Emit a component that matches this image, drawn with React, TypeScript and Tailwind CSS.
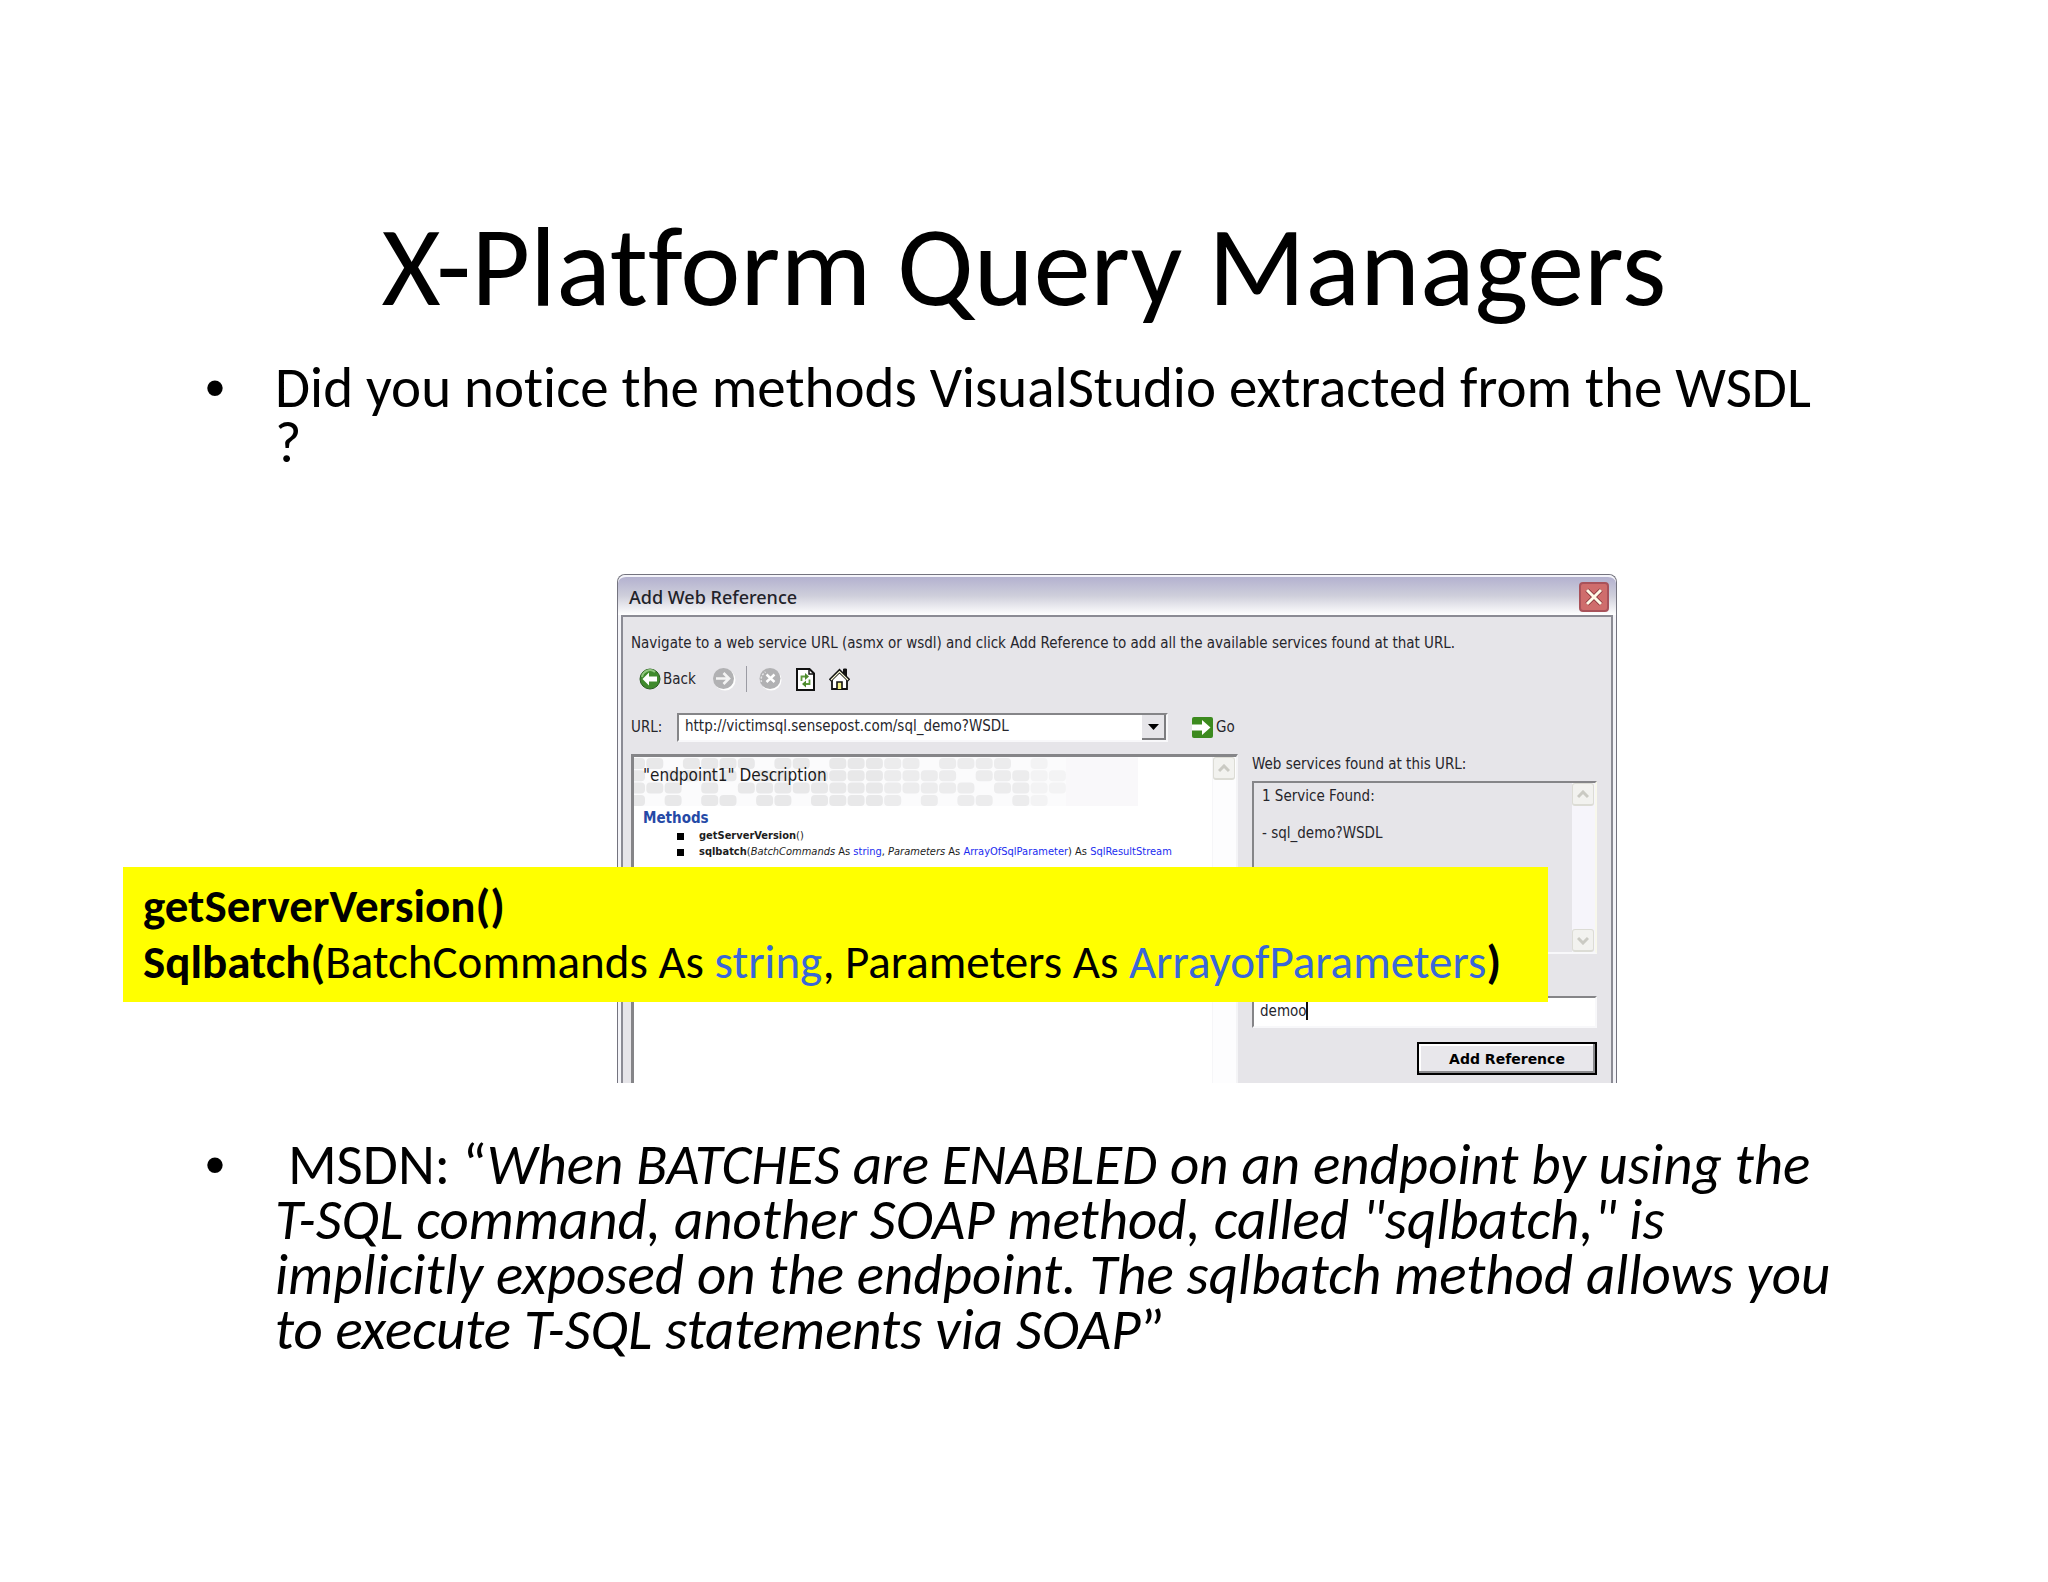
import React, { useState } from 'react';

const PATTERN = [
  '1101111011011111011110100000',
  '1011110110111111110111110000',
  '1110101111111111111011110000',
  '1010110110111110101101100000',
];

const uiFont = "font-['Tahoma','DejaVu_Sans_Condensed',sans-serif]";

function HeaderPattern() {
  return (
    <svg className="absolute left-0 top-0" width="504" height="49" viewBox="0 0 504 49" aria-hidden="true">
      <rect width="504" height="49" fill="#fbfbfc" />
      {PATTERN.map((row, y) =>
        row.split('').map((on, x) =>
          on === '1' ? (
            <rect
              key={`${x}-${y}`}
              x={x * 18.3 - 6}
              y={y * 12.3 + 1}
              width={17}
              height={11}
              rx={4}
              fill={x > 21 ? '#f3f3f4' : x > 13 ? '#ececed' : '#e8e8e9'}
            />
          ) : null
        )
      )}
      <rect x="432" y="1" width="72" height="48" fill="#f8f7f9" opacity="0.6" />
    </svg>
  );
}

function BackIcon() {
  return (
    <svg width="22" height="22" viewBox="0 0 22 22">
      <circle cx="11" cy="11" r="10" fill="#3f8a2c" stroke="#2b5c22" />
      <path d="M3 9a8 8 0 0 1 13-5" stroke="#8fc77e" strokeWidth="2" fill="none" />
      <path d="M3.5 11 10 4.5v4h8v5h-8v4z" fill="#fff" />
    </svg>
  );
}

function ForwardIcon() {
  return (
    <svg width="24" height="24" viewBox="0 0 24 24">
      <circle cx="13" cy="13" r="10.5" fill="#fff" />
      <circle cx="11.5" cy="11.5" r="10.5" fill="#b1b1b3" />
      <path d="M4 11.5h13M11.5 6l5.5 5.5-5.500 5.500" stroke="#f4f4f4" strokeWidth="2.6" fill="none" />
    </svg>
  );
}

function StopIcon() {
  return (
    <svg width="24" height="24" viewBox="0 0 24 24">
      <circle cx="13" cy="13" r="10.5" fill="#fff" />
      <circle cx="12" cy="11.5" r="10.5" fill="#b1b1b3" />
      <path d="M3.5 15a8.500 8.500 0 0 1 4-10" stroke="#e4e4e6" strokeWidth="1.500" strokeDasharray="2 1.500" fill="none" />
      <path d="m8.500 7.500 8 7.500M16.500 7.500l-8 7.500" stroke="#fff" strokeWidth="2.4" />
    </svg>
  );
}

function RefreshIcon() {
  return (
    <svg width="19" height="23" viewBox="0 0 19 23">
      <path d="M1 1h12.5l4.500 4.500V22H1z" fill="#fff" stroke="#111" strokeWidth="2" />
      <path d="M13 1v5h5" fill="none" stroke="#111" strokeWidth="1.4" />
      <path d="M5.500 13V8.500h4" stroke="#5d9a3c" strokeWidth="1.800" fill="none" />
      <path d="M9 5v7l4-3.500z" fill="#4c8a2c" />
      <path d="M13.500 11.500V16h-4" stroke="#5d9a3c" strokeWidth="1.800" fill="none" />
      <path d="M10 12.500v7L6 16z" fill="#4c8a2c" />
    </svg>
  );
}

function HomeIcon() {
  return (
    <svg width="21" height="22" viewBox="0 0 21 22">
      <path d="M14.500 1h3v7l-3-3z" fill="#111" stroke="#111" />
      <path d="M3 11v10h15V11l-7.500-7z" fill="#fff" stroke="#111" strokeWidth="1.800" />
      <path d="M1 12.500 10.500 3 20 12.500" fill="none" stroke="#111" strokeWidth="3.400" />
      <path d="M2 12 10.500 3.500 19 12" fill="none" stroke="#fbfbd8" strokeWidth="1.200" />
      <path d="M8 21v-7h5v7" fill="#f3f08a" stroke="#111" strokeWidth="1.600" />
    </svg>
  );
}

function GoIcon() {
  return (
    <svg width="21" height="21" viewBox="0 0 21 21">
      <rect width="21" height="21" rx="2" fill="#3c8a1e" />
      <path d="M0 7.500h10V3l8.500 7.500L10 18v-4.500H0z" fill="#fff" />
    </svg>
  );
}

function ScrollButton({ down = false }: { down?: boolean }) {
  return (
    <button
      type="button"
      aria-label={down ? 'Scroll down' : 'Scroll up'}
      className="flex h-[23px] w-[22px] items-center justify-center rounded-[3px] border border-b-2 border-[#dcdcd5] bg-[#f2f2ef]"
    >
      <svg width="12" height="9" viewBox="0 0 12 9" className={down ? 'rotate-180' : ''}>
        <path d="m1 7 5-5 5 5" fill="none" stroke="#cacac3" strokeWidth="3" />
      </svg>
    </button>
  );
}

function Toolbar() {
  return (
    <div className="mt-3 ml-2 flex h-7 items-center">
      <button type="button" className="flex items-center gap-0.5">
        <BackIcon />
        Back
      </button>
      <button type="button" aria-label="Forward" className="ml-4">
        <ForwardIcon />
      </button>
      <span className="ml-2.5 h-[26px] w-px bg-[#9b9ba3]" />
      <button type="button" aria-label="Stop" className="ml-[11px]">
        <StopIcon />
      </button>
      <button type="button" aria-label="Refresh" className="ml-3.5">
        <RefreshIcon />
      </button>
      <button type="button" aria-label="Home" className="ml-3.5">
        <HomeIcon />
      </button>
    </div>
  );
}

function DescriptionPanel() {
  return (
    <section className="flex min-w-0 flex-1 border-t-[3px] border-r-2 border-l-[3px] border-t-[#858588] border-r-[#f4f4f6] border-l-[#858588] bg-white">
      <div className="relative min-w-0 flex-1 pl-[9px]">
        <HeaderPattern />
        <h3 className="relative h-[49px] pt-1.5 text-[17px] leading-6 text-[#1c1c1c]">"endpoint1" Description</h3>
        <h4 className="pt-0.5 text-[15px] leading-5 font-bold text-[#2549a6]">Methods</h4>
        <ul className="pl-[34px] text-[11px] leading-4 whitespace-nowrap text-[#1c1c1c]">
          <li className="flex items-center gap-[15px]">
            <span className="size-[7px] shrink-0 bg-black" />
            <span><b>getServerVersion</b>()</span>
          </li>
          <li className="flex items-center gap-[15px]">
            <span className="size-[7px] shrink-0 bg-black" />
            <span>
              <b>sqlbatch</b>(<i>BatchCommands</i> As <span className="text-[#1a2cf0]">string</span>, <i>Parameters</i> As{' '}
              <span className="text-[#1a2cf0]">ArrayOfSqlParameter</span>) As <span className="text-[#1a2cf0]">SqlResultStream</span>
            </span>
          </li>
        </ul>
      </div>
      <div className="w-6 border-l border-[#f6f6f8] bg-[#fdfdfe]">
        <ScrollButton />
      </div>
    </section>
  );
}

function ServicesPanel() {
  const [name, setName] = useState('demoo');

  return (
    <section className="w-[345px] pb-2">
      <h3 className="leading-5">Web services found at this URL:</h3>
      <div className="mt-[7px] flex h-[173px] justify-between border-2 border-t-[#858588] border-r-[#f8f8ec] border-b-[#f8f8fa] border-l-[#858588] pl-2">
        <div className="pt-1 leading-[19px]">
          <p>1 Service Found:</p>
          <p className="mt-[18px]">- sql_demo?WSDL</p>
        </div>
        <div className="flex w-[23px] flex-col justify-between bg-[#f6f5fb]">
          <ScrollButton />
          <ScrollButton down />
        </div>
      </div>
      <div className="relative mt-[42px]">
        <input
          type="text"
          aria-label="Web reference name"
          value={name}
          onChange={(e) => setName(e.target.value)}
          className="block h-8 w-full border-2 border-t-[#858588] border-r-[#f8f8fa] border-b-[#f8f8fa] border-l-[#858588] bg-white pb-0.5 pl-1.5 outline-none"
        />
        <span className="absolute top-[5px] left-[54px] h-[19px] w-0.5 bg-[#111]" />
      </div>
      <button
        type="button"
        className="mt-3.5 ml-auto block h-[33px] w-[180px] border-2 border-black bg-[#e8e7eb] font-['DejaVu_Sans',sans-serif] text-sm leading-4 font-bold text-black shadow-[inset_-2px_-2px_0_#8b8b8e,inset_2px_2px_0_#fff]"
      >
        Add Reference
      </button>
    </section>
  );
}

function WebReferenceDialog() {
  return (
    <div className={`${uiFont} rounded-t-lg border border-b-0 border-[#74747f] bg-[#f4f4f8] text-[15px] text-[#26262c]`}>
      <header className="flex h-10 items-center justify-between rounded-t-lg border-t-2 border-[#f4f4fa] bg-linear-to-b from-[#b3b1cf] via-[#cfcfdb] to-white pt-0.5 pr-[7px] pl-[11px]">
        <h2 className="font-['Trebuchet_MS','Noto_Sans',sans-serif] text-lg leading-6 font-medium text-[#22222a]">Add Web Reference</h2>
        <button
          type="button"
          aria-label="Close"
          className="flex size-[30px] items-center justify-center rounded-[4px] border-2 border-[#a8525a] bg-[#cf6d6c]"
        >
          <svg width="18" height="18" viewBox="0 0 18 18">
            <path d="m2 2 14 14M16 2 2 16" stroke="#7c2c33" strokeWidth="4.500" />
            <path d="m2 2 14 14M16 2 2 16" stroke="#fffbe8" strokeWidth="3" />
          </svg>
        </button>
      </header>

      <div className="mx-[3px] border-2 border-b-0 border-[#8b8b94] bg-[#e6e5e9] pt-4 pr-3.5 pl-2">
        <p className="leading-5 whitespace-nowrap">
          Navigate to a web service URL (asmx or wsdl) and click Add Reference to add all the available services found at that URL.
        </p>
        <Toolbar />

        <div className="mt-5 mr-[359px] flex items-center">
          <label htmlFor="url" className="w-[46px]">URL:</label>
          <div className="relative flex-1">
            <select
              id="url"
              className="block h-[29px] w-full appearance-none border-2 border-t-[#858588] border-r-[#f8f8fa] border-b-[#f8f8fa] border-l-[#858588] bg-white pb-0.5 pl-1.5"
            >
              <option>http://victimsql.sensepost.com/sql_demo?WSDL</option>
            </select>
            <span className="pointer-events-none absolute top-0.5 right-0.5 flex h-[25px] w-6 items-center justify-center border-r-2 border-b-2 border-[#7d7d80] bg-[#e6e5e9]">
              <svg width="11" height="6" viewBox="0 0 11 6">
                <path d="M0 0h11L5.500 6z" fill="#000" />
              </svg>
            </span>
          </div>
          <button type="button" className="ml-6 flex w-[46px] items-center gap-[3px]">
            <GoIcon />
            Go
          </button>
        </div>

        <div className="mt-3 flex gap-3.5">
          <DescriptionPanel />
          <ServicesPanel />
        </div>
      </div>
    </div>
  );
}

function Bullet({ children }: { children: React.ReactNode }) {
  return (
    <li className="flex">
      <span className="w-[70px] shrink-0 font-['Arial','Liberation_Sans',sans-serif]">•</span>
      <p>{children}</p>
    </li>
  );
}

export default function App() {
  return (
    <main className="min-h-screen bg-white pt-[198px] pb-20 font-['Calibri','Carlito','Lato',sans-serif] text-black [font-variant-ligatures:none]">
      <h1 className="text-center text-[114px] leading-[136px]">X-Platform Query Managers</h1>

      <ul className="mt-[26px] pr-[212px] pl-[205px] text-[57px] leading-[55px]">
        <Bullet>Did you notice the methods VisualStudio extracted from the WSDL ?</Bullet>
      </ul>

      <div className="relative mt-[104px]">
        <div className="mr-[431px] ml-[617px]">
          <WebReferenceDialog />
        </div>
        <div className="absolute top-[293px] right-[500px] left-[123px] bg-[#ffff00] px-5 pt-[11px] pb-3 text-[47px] leading-[56px] whitespace-nowrap">
          <p className="font-bold">getServerVersion()</p>
          <p>
            <b>Sqlbatch(</b>BatchCommands As <span className="text-[#3a67d8]">string</span>, Parameters As{' '}
            <span className="text-[#3a67d8]">ArrayofParameters</span>
            <b>)</b>
          </p>
        </div>
      </div>

      <ul className="mt-[54px] pr-[212px] pl-[205px] text-[57px] leading-[55px]">
        <Bullet>
          &nbsp;MSDN: “<i>When BATCHES are ENABLED on an endpoint by using the T-SQL command, another SOAP method, called "sqlbatch," is
          implicitly exposed on the endpoint. The sqlbatch method allows you to execute T-SQL statements via SOAP</i>”
        </Bullet>
      </ul>
    </main>
  );
}
